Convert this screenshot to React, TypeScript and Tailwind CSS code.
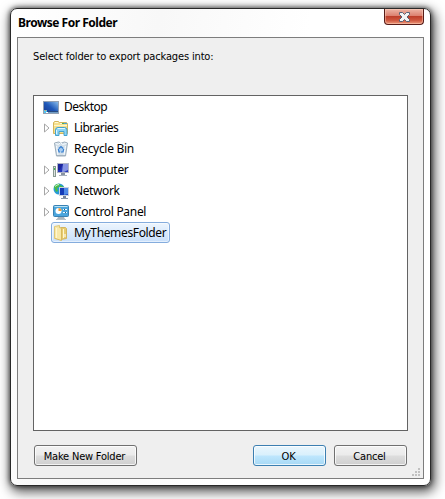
import React from 'react';

const DesktopIcon = () => (
  <svg className="shrink-0" width="16" height="16" viewBox="0 0 16 16">
    <defs><linearGradient id="desk" x1="0" y1="1" x2="1" y2="0"><stop offset="0" stopColor="#17358c" /><stop offset=".5" stopColor="#1f58b8" /><stop offset="1" stopColor="#8ec2ee" /></linearGradient></defs>
    <rect x=".5" y="2.5" width="15" height="12" fill="url(#desk)" stroke="#93a1b3" />
    <path d="M1 13h14v1H1z" fill="#6f9cc4" /><path d="M5 12h10v1H5z" fill="#294a80" />
    <path d="M1 11h3v3H1z" fill="#55c5ee" /><path d="M3 13h2v1H3z" fill="#fff" />
    <path d="M2 11h1v1H2z" fill="#f1a24a" />
  </svg>
);
const LibrariesIcon = () => (
  <svg className="shrink-0" width="16" height="16" viewBox="0 0 16 16">
    <path d="M.5 13.5v-11l1-1h4l1 1h7l1 1v10z" fill="#f5df8c" stroke="#d3b55c" />
    <path d="M2 2.5h3M7 3.5h2" stroke="#fff8d8" />
    <path d="M9 3.5h2" stroke="#4eae60" /><path d="M11 3.5h3" stroke="#4aa3da" />
    <path d="M1 5.5h13" stroke="#fff6c8" />
    <path d="M2.5 15.5V10q0-2.5 2.5-2.5h6.5q2.5 0 2.5 2.5v5.5h-3v-4h-5v4z" fill="#8dd4f4" stroke="#45a2cf" />
    <path d="M4.5 8.5h7.5M3.5 10v4" stroke="#dff7ff" />
  </svg>
);
const RecycleIcon = () => (
  <svg className="shrink-0" width="16" height="16" viewBox="0 0 16 16">
    <path d="M1.5 2l2 13h9l2-13-3-1-3 1-3-1z" fill="#d3dfe8" stroke="#9dadba" />
    <path d="M2.5 2.5l3 1 2-2 2 2 4-1M3.5 5l1.5 9M12.5 5L11 14" fill="none" stroke="#f6fbff" />
    <circle cx="8" cy="8.5" r="3" fill="#a7ccf0" />
    <path d="M6 7.5L8 5.5l2 2M10.7 8l-.7 3H8M5.3 8l.7 3h1" fill="none" stroke="#3a80d0" strokeWidth="1.2" />
    <path d="M4 14.5h8" stroke="#a3b2bf" />
  </svg>
);
const ComputerIcon = () => (
  <svg className="shrink-0" width="16" height="16" viewBox="0 0 16 16">
    <rect x=".5" y="4.5" width="2" height="10" fill="#dde3e1" stroke="#899991" />
    <path d="M1 6h1v2H1z" fill="#42ba52" />
    <rect x="4.5" y="1.5" width="11" height="9" fill="#2337b8" stroke="#b0b4c6" />
    <path d="M10 2h5v6l-4 2H9z" fill="#8694e2" /><path d="M5 2h5L7 8H5z" fill="#1c259b" />
    <path d="M8 11h4v2H8z" fill="#8792a2" /><path d="M6 13.5h8" stroke="#a7b0bb" />
  </svg>
);
const NetworkIcon = () => (
  <svg className="shrink-0" width="16" height="16" viewBox="0 0 16 16">
    <circle cx="6" cy="6" r="5.5" fill="#279bd8" />
    <path d="M1 4q2-4 6-3L6 4 4 5l1 3-2 1zM7 2l4 2-2 3-2-1z" fill="#4cba45" />
    <path d="M2 3.5q2-2 4-2" stroke="#d0f5cf" fill="none" />
    <rect x="6.5" y="4.5" width="9" height="8" fill="#153cb8" stroke="#c7d0df" />
    <path d="M11 5h4v6l-4 1z" fill="#4f8ae7" />
    <path d="M10 13h3v2h-3z" fill="#75839a" /><path d="M8 15.5h7" stroke="#8997aa" />
  </svg>
);
const ControlIcon = () => (
  <svg className="shrink-0" width="16" height="16" viewBox="0 0 16 16">
    <rect x=".5" y="1.5" width="15" height="11" rx="1" fill="#4ba5dc" stroke="#3a81b2" />
    <path d="M1.5 2.5h13" stroke="#b9e4f7" />
    <circle cx="5.5" cy="7" r="3" fill="#fff" /><path d="M5.5 7V4a3 3 0 0 1 3 3z" fill="#f29b33" />
    <path d="M10 5.5h4M10 8.5h4" stroke="#f4fcff" /><path d="M11 5h1v1h-1zM12 8h1v1h-1z" fill="#24618c" />
    <path d="M5 13h6l1 2H4z" fill="#a9b5be" /><path d="M3 15.5h10" stroke="#b8c1c8" />
  </svg>
);
const FolderIcon = () => (
  <svg className="shrink-0" width="16" height="16" viewBox="0 0 16 16">
    <path d="M7.5 14.5v-12h5l1 1v10z" fill="#e7cc70" stroke="#d3b560" />
    <path d="M1.5 13.5v-12l5-1v13z" fill="#f6e4a0" stroke="#dfc777" />
    <path d="M3 2l5 1.5V15.5L2 13.500V2z" fill="#f8e8a8" />
    <path d="M8.5 3.5v12L2 13.5" stroke="#d8b95e" fill="none" />
    <path d="M3.5 3v10M10.5 4v9" stroke="#fff6cf" /><path d="M12 9v3" stroke="#fff" />
  </svg>
);

const items = [
  { text: 'Libraries', Icon: LibrariesIcon, arrow: true, tracking: 'tracking-[-0.5px]' },
  { text: 'Recycle Bin', Icon: RecycleIcon, arrow: false, tracking: 'tracking-[-0.3px]' },
  { text: 'Computer', Icon: ComputerIcon, arrow: true, tracking: 'tracking-[-0.3px]' },
  { text: 'Network', Icon: NetworkIcon, arrow: true, tracking: 'tracking-[-0.4px]' },
  { text: 'Control Panel', Icon: ControlIcon, arrow: true, tracking: 'tracking-[-0.3px]' },
];

const buttonBase = "flex h-[21px] items-center justify-center rounded-[3px] border pt-[3px] pr-0.5 font-['DejaVu_Sans_Condensed','DejaVu_Sans',sans-serif] text-[11px] leading-4 font-stretch-condensed tracking-[-0.2px] shadow-[inset_0_0_0_1px_rgba(255,255,255,.75)]";

export default function App() {
  return (
    <div className="h-[499px] w-[445px] overflow-hidden bg-white pt-2 pl-[10px] text-black">
      <div className="flex h-[478px] w-[421px] flex-col rounded-[7px] border border-[#292929] bg-[linear-gradient(100deg,#fff_0%,#f8f8f8_30%,#fff_60%)] px-[6px] shadow-[0_0_4px_1px_rgba(0,0,0,.5),2px_4px_12px_2px_rgba(0,0,0,.65)]">
        <header className="flex h-7 justify-between">
          <h1 className="pt-[5px] pl-px font-['Noto_Sans',sans-serif] text-[12px] leading-[18px] font-bold tracking-[-0.48px]">Browse For Folder</h1>
          <button aria-label="Close" className="flex h-4 w-10 items-center justify-center rounded-b-[4px] border border-t-0 border-[#571c18] bg-[linear-gradient(#eeb5a6_0%,#dc8170_45%,#be3f2b_50%,#ce573f_75%,#ef9b7d_100%)] shadow-[inset_0_0_0_1px_rgba(255,215,195,.45)]">
            <svg width="11" height="10" viewBox="0 0 11 10"><path d="M.5.5h3l2 2 2-2h3v2L8 5l2.5 2.5v2h-3l-2-2-2 2h-3v-2L3 5 .5 2.5z" fill="#f4f4f5" stroke="#596478" /></svg>
          </button>
        </header>
        <main className="h-[442px] w-[407px] border border-[#7d7d7d] bg-[#efefef] pl-[15px]">
          <div className="h-[57px] pt-[11px] font-['DejaVu_Sans_Condensed','DejaVu_Sans',sans-serif] text-[11px] leading-4 font-stretch-condensed tracking-[-0.15px]">Select folder to export packages into:</div>
          <div className="h-[336px] w-[375px] border border-[#636363] bg-white pl-[9px] font-['Noto_Sans',sans-serif] text-[12px] leading-[19px]">
            <div className="flex h-[21px] items-center"><DesktopIcon /><span className="ml-[5px] tracking-[-0.5px]">Desktop</span></div>
            {items.map(({ text, Icon, arrow, tracking }) => (
              <div key={text} className="flex h-[21px] items-center">
                <div className="w-[10px] shrink-0">{arrow && <svg className="ml-px" width="6" height="10" viewBox="0 0 6 10"><path d="M.5 1v8l4.500-4z" fill="#fff" stroke="#a6a6a6" /></svg>}</div>
                <Icon /><span className={`ml-[5px] ${tracking}`}>{text}</span>
              </div>
            ))}
            <div className="ml-2 flex h-[21px] w-[119px] items-center rounded-[3px] border border-[#84acdd] bg-gradient-to-b from-[#edf5fd] to-[#c9e0fb] pl-px shadow-[inset_0_0_0_1px_rgba(255,255,255,.5)]"><FolderIcon /><span className="ml-[5px] tracking-[-0.35px]">MyThemesFolder</span></div>
          </div>
          <div className="mt-[14px] flex w-[374px] pl-px">
            <button className={`${buttonBase} w-[103px] border-[#707070] bg-[linear-gradient(#f2f2f2_0%,#ebebeb_48%,#dddddd_52%,#cfcfcf_100%)]`}>Make New Folder</button>
            <button className={`${buttonBase} ml-[116px] w-[73px] border-[#3c7fb1] bg-[linear-gradient(#eaf6fd_0%,#d9f0fc_48%,#bee6fd_52%,#a7d9f5_100%)]`}>OK</button>
            <button className={`${buttonBase} ml-2 w-[73px] border-[#707070] bg-[linear-gradient(#f2f2f2_0%,#ebebeb_48%,#dddddd_52%,#cfcfcf_100%)]`}>Cancel</button>
          </div>
          <div className="mt-[2px] flex justify-end pr-[3px]">
            <svg width="8" height="8" viewBox="0 0 8 8"><path d="M6 0h2v2H6zM3 3h2v2H3zM6 3h2v2H6zM0 6h2v2H0zM3 6h2v2H3zM6 6h2v2H6z" fill="#c1c1c1" /></svg>
          </div>
        </main>
      </div>
    </div>
  );
}
